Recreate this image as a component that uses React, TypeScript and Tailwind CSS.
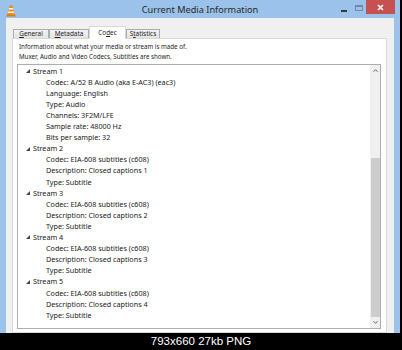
import React from "react";

const font = { fontFamily: '"Noto Sans", "Open Sans", sans-serif' };

type Row = { level: 0 | 1; text: string };

const rows: Row[] = [
  { level: 0, text: "Stream 1" },
  { level: 1, text: "Codec: A/52 B Audio (aka E-AC3) (eac3)" },
  { level: 1, text: "Language: English" },
  { level: 1, text: "Type: Audio" },
  { level: 1, text: "Channels: 3F2M/LFE" },
  { level: 1, text: "Sample rate: 48000 Hz" },
  { level: 1, text: "Bits per sample: 32" },
  { level: 0, text: "Stream 2" },
  { level: 1, text: "Codec: EIA-608 subtitles (c608)" },
  { level: 1, text: "Description: Closed captions 1" },
  { level: 1, text: "Type: Subtitle" },
  { level: 0, text: "Stream 3" },
  { level: 1, text: "Codec: EIA-608 subtitles (c608)" },
  { level: 1, text: "Description: Closed captions 2" },
  { level: 1, text: "Type: Subtitle" },
  { level: 0, text: "Stream 4" },
  { level: 1, text: "Codec: EIA-608 subtitles (c608)" },
  { level: 1, text: "Description: Closed captions 3" },
  { level: 1, text: "Type: Subtitle" },
  { level: 0, text: "Stream 5" },
  { level: 1, text: "Codec: EIA-608 subtitles (c608)" },
  { level: 1, text: "Description: Closed captions 4" },
  { level: 1, text: "Type: Subtitle" },
];

function VlcIcon() {
  return (
    <svg width="10" height="12" viewBox="0 0 10 12">
      <path d="M0.5 9.5 L9.5 9.5 L9.5 11.5 L0.5 11.5 Z" fill="#e07a10" />
      <path d="M3.6 0.5 L6.4 0.5 L8.6 10 L1.4 10 Z" fill="#f08a12" />
      <path d="M3.1 3 L6.9 3 L7.3 4.6 L2.7 4.6 Z" fill="#fff" />
      <path d="M2.3 6.4 L7.7 6.4 L8.1 8 L1.9 8 Z" fill="#fff" />
    </svg>
  );
}

function Tab({ label, selected, w }: { label: [string, string, string]; selected?: boolean; w: string }) {
  const inner = (
    <span>
      {label[0]}
      <span className="underline underline-offset-1">{label[1]}</span>
      {label[2]}
    </span>
  );
  if (selected) {
    return (
      <div
        className={`${w} h-[13px] -mb-[1px] bg-white border border-b-0 border-[#d9d9d9] flex items-center justify-center text-[6.4px] text-[#1e1e1e] relative z-10`}
      >
        {inner}
      </div>
    );
  }
  return (
    <div
      className={`${w} h-[9px] bg-gradient-to-b from-[#f3f3f3] to-[#e3e3e3] border border-b-0 border-[#acacac] flex items-center justify-center text-[6.4px] text-[#1e1e1e]`}
    >
      {inner}
    </div>
  );
}

export default function App() {
  return (
    <div className="w-[402px] h-[350px] bg-black flex flex-col overflow-hidden" style={font}>
      <div className="w-[400px] h-[333px] bg-[#9ac2ea] flex flex-col overflow-hidden shrink-0">
        {/* title bar */}
        <div className="h-[18px] shrink-0 grid grid-cols-[1fr_auto_1fr] items-start">
          <div className="pl-[6px] pt-[5px]">
            <VlcIcon />
          </div>
          <div className="pt-[3px] text-[9.2px] leading-[14px] text-[#2a2a2a]">Current Media Information</div>
          <div className="flex justify-end items-start pr-[5px]">
            <div className="w-[16px] h-[14px] flex items-start justify-center pt-[10px]">
              <div className="w-[6px] h-[1.5px] bg-[#3a3a3a]" />
            </div>
            <div className="w-[13px] h-[14px] flex items-start justify-center pt-[5px] mr-[1px]">
              <div className="w-[8px] h-[6px] border border-t-2 border-[#6f8aa8]" />
            </div>
            <div className="w-[29px] h-[14px] bg-[#c75050] flex items-center justify-center">
              <svg width="7" height="7" viewBox="0 0 7 7">
                <path d="M1 1 L6 6 M6 1 L1 6" stroke="#fff" strokeWidth="1.6" />
              </svg>
            </div>
          </div>
        </div>
        {/* content */}
        <div className="flex-1 ml-[6px] mr-[6px] bg-[#f0f0f0] flex flex-col pt-[8px] pl-[6px] pr-[7px] min-h-0">
          <div className="flex items-end pl-[1px] h-[12px] shrink-0">
            <Tab label={["", "G", "eneral"]} w="w-[36px]" />
            <Tab label={["", "M", "etadata"]} w="w-[40px]" />
            <Tab label={["Co", "d", "ec"]} selected w="w-[37px]" />
            <Tab label={["S", "t", "atistics"]} w="w-[34px]" />
          </div>
          <div className="flex-1 bg-white border border-[#d9d9d9] pl-[4px] pr-[5px] pt-[3px] flex flex-col min-h-0">
            <div className="text-[6.2px] leading-[10px] text-[#1e1e1e] pl-[2px]">
              <div>Information about what your media or stream is made of.</div>
              <div>Muxer, Audio and Video Codecs, Subtitles are shown.</div>
            </div>
            <div className="mt-[2px] h-[265px] shrink-0 border border-[#abadb3] flex">
              <div className="flex-1 pt-[0.5px]">
                {rows.map((r, i) => (
                  <div key={i} className="h-[11.1px] flex items-center text-[7.2px] text-[#1a1a1a] whitespace-nowrap">
                    {r.level === 0 ? (
                      <>
                        <div className="w-[15px] flex justify-end pr-[3px]">
                          <svg width="4" height="4" viewBox="0 0 4 4">
                            <path d="M4 0 L4 4 L0 4 Z" fill="#454545" />
                          </svg>
                        </div>
                        <span>{r.text}</span>
                      </>
                    ) : (
                      <span className="pl-[28px]">{r.text}</span>
                    )}
                  </div>
                ))}
              </div>
              <div className="w-[10px] bg-[#f0f0f0] flex flex-col">
                <div className="h-[11px] flex items-center justify-center">
                  <svg width="5" height="3" viewBox="0 0 5 3">
                    <path d="M0.5 2.7 L2.5 0.7 L4.5 2.7" stroke="#606060" strokeWidth="1" fill="none" />
                  </svg>
                </div>
                <div className="h-[82px]" />
                <div className="h-[159px] mx-[0.5px] bg-[#cdcdcd]" />
                <div className="flex-1 flex items-center justify-center">
                  <svg width="5" height="3" viewBox="0 0 5 3">
                    <path d="M0.5 0.3 L2.5 2.3 L4.5 0.3" stroke="#606060" strokeWidth="1" fill="none" />
                  </svg>
                </div>
              </div>
            </div>
          </div>
        </div>
      </div>
      <div
        className="flex-1 flex items-center justify-center text-white text-[11.5px]"
        style={{ fontFamily: '"Liberation Sans", Arial, sans-serif' }}
      >
        793x660 27kb PNG
      </div>
    </div>
  );
}
